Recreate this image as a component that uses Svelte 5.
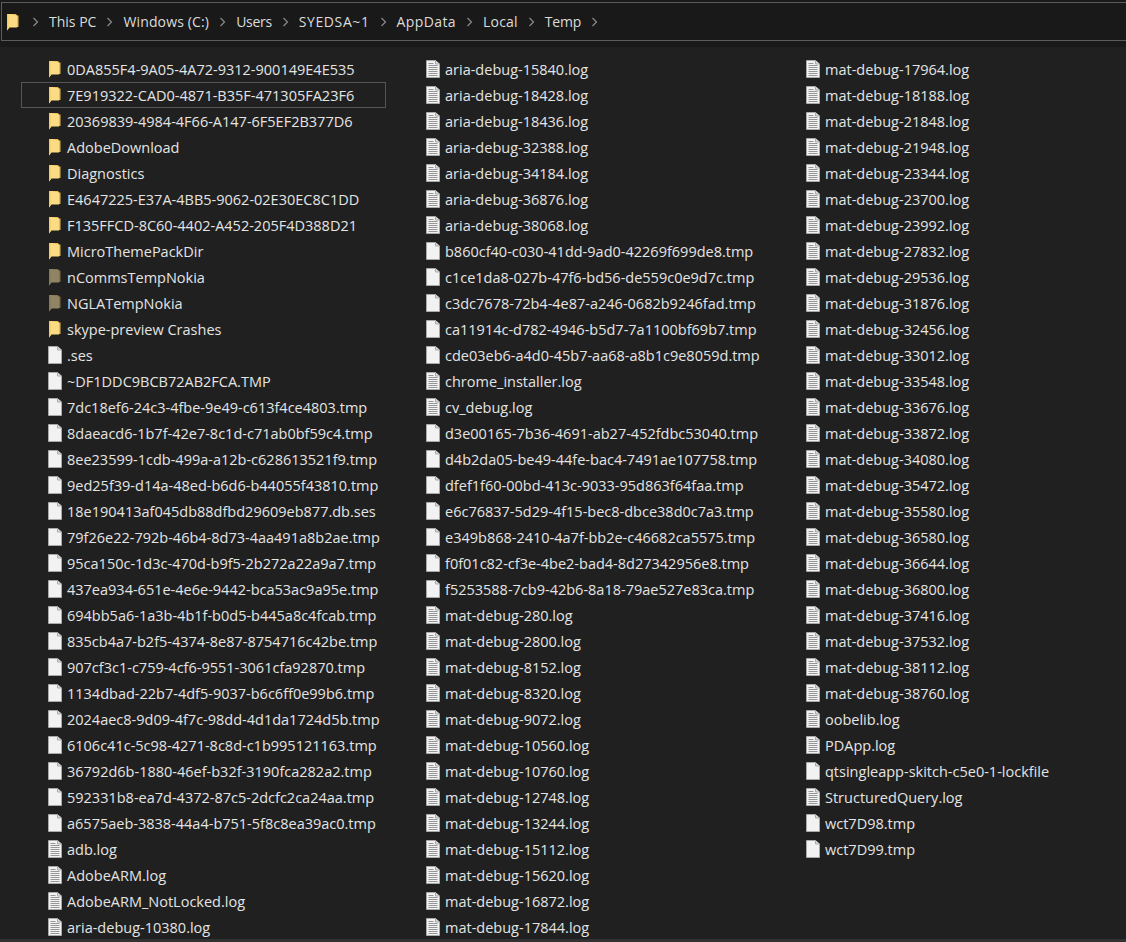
<script lang="ts">
  const columns = [
    [
      'd:0DA855F4-9A05-4A72-9312-900149E4E535',
      'd:7E919322-CAD0-4871-B35F-471305FA23F6',
      'd:20369839-4984-4F66-A147-6F5EF2B377D6',
      'd:AdobeDownload',
      'd:Diagnostics',
      'd:E4647225-E37A-4BB5-9062-02E30EC8C1DD',
      'd:F135FFCD-8C60-4402-A452-205F4D388D21',
      'd:MicroThemePackDir',
      'h:nCommsTempNokia',
      'h:NGLATempNokia',
      'd:skype-preview Crashes',
      '.ses',
      '~DF1DDC9BCB72AB2FCA.TMP',
      '7dc18ef6-24c3-4fbe-9e49-c613f4ce4803.tmp',
      '8daeacd6-1b7f-42e7-8c1d-c71ab0bf59c4.tmp',
      '8ee23599-1cdb-499a-a12b-c628613521f9.tmp',
      '9ed25f39-d14a-48ed-b6d6-b44055f43810.tmp',
      '18e190413af045db88dfbd29609eb877.db.ses',
      '79f26e22-792b-46b4-8d73-4aa491a8b2ae.tmp',
      '95ca150c-1d3c-470d-b9f5-2b272a22a9a7.tmp',
      '437ea934-651e-4e6e-9442-bca53ac9a95e.tmp',
      '694bb5a6-1a3b-4b1f-b0d5-b445a8c4fcab.tmp',
      '835cb4a7-b2f5-4374-8e87-8754716c42be.tmp',
      '907cf3c1-c759-4cf6-9551-3061cfa92870.tmp',
      '1134dbad-22b7-4df5-9037-b6c6ff0e99b6.tmp',
      '2024aec8-9d09-4f7c-98dd-4d1da1724d5b.tmp',
      '6106c41c-5c98-4271-8c8d-c1b995121163.tmp',
      '36792d6b-1880-46ef-b32f-3190fca282a2.tmp',
      '592331b8-ea7d-4372-87c5-2dcfc2ca24aa.tmp',
      'a6575aeb-3838-44a4-b751-5f8c8ea39ac0.tmp',
      'adb.log',
      'AdobeARM.log',
      'AdobeARM_NotLocked.log',
      'aria-debug-10380.log'
    ],
    [
      'aria-debug-15840.log',
      'aria-debug-18428.log',
      'aria-debug-18436.log',
      'aria-debug-32388.log',
      'aria-debug-34184.log',
      'aria-debug-36876.log',
      'aria-debug-38068.log',
      'b860cf40-c030-41dd-9ad0-42269f699de8.tmp',
      'c1ce1da8-027b-47f6-bd56-de559c0e9d7c.tmp',
      'c3dc7678-72b4-4e87-a246-0682b9246fad.tmp',
      'ca11914c-d782-4946-b5d7-7a1100bf69b7.tmp',
      'cde03eb6-a4d0-45b7-aa68-a8b1c9e8059d.tmp',
      'chrome_installer.log',
      'cv_debug.log',
      'd3e00165-7b36-4691-ab27-452fdbc53040.tmp',
      'd4b2da05-be49-44fe-bac4-7491ae107758.tmp',
      'dfef1f60-00bd-413c-9033-95d863f64faa.tmp',
      'e6c76837-5d29-4f15-bec8-dbce38d0c7a3.tmp',
      'e349b868-2410-4a7f-bb2e-c46682ca5575.tmp',
      'f0f01c82-cf3e-4be2-bad4-8d27342956e8.tmp',
      'f5253588-7cb9-42b6-8a18-79ae527e83ca.tmp',
      'mat-debug-280.log',
      'mat-debug-2800.log',
      'mat-debug-8152.log',
      'mat-debug-8320.log',
      'mat-debug-9072.log',
      'mat-debug-10560.log',
      'mat-debug-10760.log',
      'mat-debug-12748.log',
      'mat-debug-13244.log',
      'mat-debug-15112.log',
      'mat-debug-15620.log',
      'mat-debug-16872.log',
      'mat-debug-17844.log'
    ],
    [
      'mat-debug-17964.log',
      'mat-debug-18188.log',
      'mat-debug-21848.log',
      'mat-debug-21948.log',
      'mat-debug-23344.log',
      'mat-debug-23700.log',
      'mat-debug-23992.log',
      'mat-debug-27832.log',
      'mat-debug-29536.log',
      'mat-debug-31876.log',
      'mat-debug-32456.log',
      'mat-debug-33012.log',
      'mat-debug-33548.log',
      'mat-debug-33676.log',
      'mat-debug-33872.log',
      'mat-debug-34080.log',
      'mat-debug-35472.log',
      'mat-debug-35580.log',
      'mat-debug-36580.log',
      'mat-debug-36644.log',
      'mat-debug-36800.log',
      'mat-debug-37416.log',
      'mat-debug-37532.log',
      'mat-debug-38112.log',
      'mat-debug-38760.log',
      'oobelib.log',
      'PDApp.log',
      'qtsingleapp-skitch-c5e0-1-lockfile',
      'StructuredQuery.log',
      'wct7D98.tmp',
      'wct7D99.tmp'
    ]
  ];

  const crumbs = [
    { name: 'This PC', tracking: 0 },
    { name: 'Windows (C:)', tracking: 0.15 },
    { name: 'Users', tracking: -0.3 },
    { name: 'SYEDSA~1', tracking: 0.6 },
    { name: 'AppData', tracking: 0.4 },
    { name: 'Local', tracking: 0.2 },
    { name: 'Temp', tracking: -0.2 }
  ];

  function parse(entry: string) {
    if (entry.startsWith('d:')) return { kind: 'folder', name: entry.slice(2) };
    if (entry.startsWith('h:')) return { kind: 'hidden', name: entry.slice(2) };
    const lined = entry.endsWith('.log');
    return { kind: lined ? 'log' : 'file', name: entry };
  }
</script>

{#snippet chevron()}
  <svg class="chevron" width="7" height="10" viewBox="0 0 7 10">
    <path d="M1.5 1l4 4-4 4" fill="none" stroke="#8a8a8a" stroke-width="1.2" />
  </svg>
{/snippet}

{#snippet foldericon(dim: boolean)}
  <svg class="icon" class:dim width="14" height="18" viewBox="0 0 14 18">
    <path d="M1 1h9l1 1.500h1.500V14H4v-2H1z" fill="#e9b94c" />
    <path d="M1 1h2.500l7.500 1.500V14.500H3.500L1 17.500z" fill="#fbdc84" />
    <path d="M1 17.500V1h1.500v14.500z" fill="#f6c95c" />
  </svg>
{/snippet}

{#snippet pageicon(lined: boolean)}
  <svg class="icon" width="14" height="18" viewBox="0 0 14 18">
    <path d="M.5.500h9l4 3.500v13.500H.5z" fill="#f2f2f2" stroke="#a9a9a9" />
    <path d="M9.500 .500v3.500h4" fill="#dcdcdc" stroke="#a9a9a9" />
    {#if lined}
      <path d="M2.500 3.500h5M2.500 5.500h9M2.500 7.500h9M2.500 9.500h9M2.500 11.500h9M2.500 13.500h9M2.500 15.500h9" stroke="#969696" stroke-width="1" />
    {/if}
  </svg>
{/snippet}

<div class="explorer">
  <div class="addressbar">
    <span class="rooticon">{@render foldericon(false)}</span>
    {#each crumbs as crumb}
      {@render chevron()}
      <span class="crumb" style="letter-spacing: {crumb.tracking}px">{crumb.name}</span>
    {/each}
    {@render chevron()}
  </div>

  <div class="listing">
    {#each columns as col, c}
      <div class="column">
        {#each col.map(parse) as item, i}
          <div class="row" class:selected={c === 0 && i === 1}>
            {#if item.kind === 'folder' || item.kind === 'hidden'}
              {@render foldericon(item.kind === 'hidden')}
            {:else}
              {@render pageicon(item.kind === 'log')}
            {/if}
            <span class="name">{item.name}</span>
          </div>
        {/each}
      </div>
    {/each}
  </div>

  <div class="statusedge"></div>
</div>

<style>
  :global(body) {
    background: #202020;
  }
  .explorer {
    width: 1126px;
    height: 942px;
    overflow: hidden;
    display: flex;
    flex-direction: column;
    background: #202020;
    color: #e4e4e4;
    font-family: "Open Sans", "Noto Sans", sans-serif;
    font-size: 14.500px;
  }
  .addressbar {
    height: 47px;
    box-sizing: border-box;
    flex: none;
    padding-left: 6px;
    padding-bottom: 6px;
    display: flex;
    align-items: center;
    background: #191919;
    border-top: 2px solid #191919;
    position: relative;
    gap: 10px;
  }
  .addressbar::before {
    content: "";
    position: absolute;
    left: 1px;
    right: 0;
    top: 0;
    height: 37px;
    border: 1px solid #5c5c5c;
    border-right: none;
    pointer-events: none;
  }
  .rooticon {
    display: flex;
    margin-right: 2px;
  }
  .crumb {
    font-size: 14px;
    color: #dcdcdc;
  }
  .chevron {
    flex: none;
  }
  .listing {
    flex: 1;
    display: flex;
    padding-top: 9px;
    padding-left: 21px;
    min-height: 0;
    overflow: hidden;
  }
  .column {
    width: 379px;
    flex: none;
  }
  .column + .column + .column {
    margin-left: 1px;
  }
  .column:first-child .row {
    padding-left: 27px;
  }
  .row {
    height: 26px;
    width: 365px;
    box-sizing: border-box;
    padding-left: 26px;
    display: flex;
    align-items: center;
    gap: 5px;
    white-space: nowrap;
  }
  .row.selected {
    outline: 1px solid #555;
    outline-offset: -1px;
  }
  .icon {
    flex: none;
  }
  .icon.dim {
    filter: brightness(0.6) saturate(0.6);
  }
  .name {
    line-height: 1;
    position: relative;
    top: 1px;
  }
  .statusedge {
    flex: none;
    height: 3px;
    background: #323232;
  }
</style>
